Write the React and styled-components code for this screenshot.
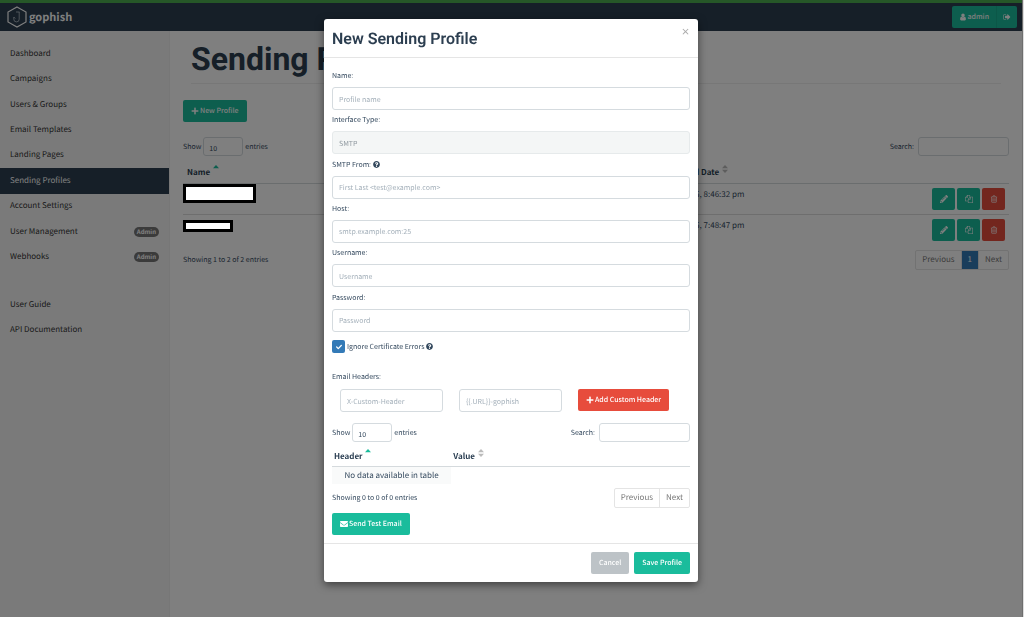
import React from "react";
import styled, { createGlobalStyle, css } from "styled-components";
import {
  FaCheck,
  FaEnvelope,
  FaPencilAlt,
  FaPlus,
  FaQuestionCircle,
} from "react-icons/fa";

const sans = `"Noto Sans CJK SC", "Noto Sans", sans-serif`;
const heading = `Roboto, "Liberation Sans", sans-serif`;

const ICONS = {
  user: "M1536 1399q0 109-62.5 187t-150.5 78h-854q-88 0-150.5-78t-62.5-187q0-85 8.5-160.5t31.5-152 58.5-131 94-89 134.5-34.5q131 128 313 128t313-128q76 0 134.5 34.5t94 89 58.5 131 31.5 152 8.5 160.5zm-256-887q0 159-112.5 271.5t-271.5 112.5-271.5-112.5-112.5-271.5 112.5-271.5 271.5-112.5 271.5 112.5 112.5 271.5z",
  signOut:
    "M704 1440q0 4 1 20t.5 26.5-3 23.5-10 19.5-20.5 6.5h-320q-119 0-203.5-84.5t-84.5-203.5v-704q0-119 84.5-203.5t203.5-84.5h320q13 0 22.5 9.5t9.5 22.5q0 4 1 20t.5 26.5-3 23.5-10 19.5-20.5 6.5h-320q-66 0-113 47t-47 113v704q0 66 47 113t113 47h312l11.5 1 11.5 3 8 5.5 7 9 2 13.5zm928-544q0 26-19 45l-544 544q-19 19-45 19t-45-19-19-45v-288h-448q-26 0-45-19t-19-45v-384q0-26 19-45t45-19h448v-288q0-26 19-45t45-19 45 19l544 544q19 19 19 45z",
  copy: "M1696 384q40 0 68 28t28 68v1216q0 40-28 68t-68 28h-960q-40 0-68-28t-28-68v-288h-544q-40 0-68-28t-28-68v-672q0-40 20-88t48-76l408-408q28-28 76-48t88-20h416q40 0 68 28t28 68v328q68-40 128-40h416zm-544 213l-299 299h299v-299zm-640-384l-299 299h299v-299zm196 647l316-316v-416h-384v416q0 40-28 68t-68 28h-416v640h512v-256q0-40 20-88t48-76zm956 804v-1152h-384v416q0 40-28 68t-68 28h-416v640h896z",
  trash:
    "M704 736v576q0 14-9 23t-23 9h-64q-14 0-23-9t-9-23v-576q0-14 9-23t23-9h64q14 0 23 9t9 23zm256 0v576q0 14-9 23t-23 9h-64q-14 0-23-9t-9-23v-576q0-14 9-23t23-9h64q14 0 23 9t9 23zm256 0v576q0 14-9 23t-23 9h-64q-14 0-23-9t-9-23v-576q0-14 9-23t23-9h64q14 0 23 9t9 23zm128 724v-948h-896v948q0 22 7 40.5t14.5 27 10.5 8.5h832q3 0 10.5-8.5t14.5-27 7-40.5zm-672-1076h448l-48-117q-7-9-17-11h-317q-10 2-17 11zm928 32v64q0 14-9 23t-23 9h-96v948q0 83-47 143.5t-113 60.5h-832q-66 0-113-58.5t-47-141.5v-952h-96q-14 0-23-9t-9-23v-64q0-14 9-23t23-9h309l70-167q15-37 54-63t79-26h320q40 0 79 26t54 63l70 167h309q14 0 23 9t9 23z",
};

const NAV = [
  { label: "Dashboard" },
  { label: "Campaigns" },
  { label: "Users & Groups" },
  { label: "Email Templates" },
  { label: "Landing Pages" },
  { label: "Sending Profiles", active: true },
  { label: "Account Settings" },
  { label: "User Management", admin: true },
  { label: "Webhooks", admin: true },
];

const HELP_NAV = [{ label: "User Guide" }, { label: "API Documentation" }];

const PROFILES = [
  { id: 1, date: "May 15th 2025, 8:46:32 pm", width: 73, height: 19 },
  { id: 2, date: "May 15th 2025, 7:48:47 pm", width: 50, height: 12 },
];

const FIELDS = [
  { id: "name", label: "Name:", placeholder: "Profile name" },
  { id: "type", label: "Interface Type:", value: "SMTP", disabled: true },
  {
    id: "from",
    label: "SMTP From:",
    placeholder: "First Last <test@example.com>",
    help: true,
  },
  { id: "host", label: "Host:", placeholder: "smtp.example.com:25" },
  { id: "username", label: "Username:", placeholder: "Username" },
  {
    id: "password",
    label: "Password:",
    placeholder: "Password",
    type: "password",
  },
];

function Icon({ name }) {
  return (
    <svg viewBox="0 0 1792 1792" fill="currentColor">
      <path d={ICONS[name]} />
    </svg>
  );
}

function SortMark({ sorted }) {
  return (
    <S.SortMark viewBox="0 0 6 8" $sorted={sorted}>
      <path d="M0 3.2 3 0l3 3.2z" />
      {!sorted && <path d="M0 4.8h6L3 8z" />}
    </S.SortMark>
  );
}

function NavList({ items, height }) {
  return (
    <S.NavList $height={height}>
      {items.map(({ label, active, admin }) => (
        <li key={label}>
          <S.NavLink href="#" $active={active}>
            {label}
            {admin && <S.Badge>Admin</S.Badge>}
          </S.NavLink>
        </li>
      ))}
    </S.NavList>
  );
}

function TableTools({ id }) {
  return (
    <S.TableTools>
      <S.InlineLabel htmlFor={`${id}-length`}>
        Show
        <S.Length id={`${id}-length`} defaultValue="10">
          <option>10</option>
          <option>25</option>
        </S.Length>
        entries
      </S.InlineLabel>
      <S.InlineLabel htmlFor={`${id}-search`} $wide>
        Search:
        <S.Search id={`${id}-search`} type="search" />
      </S.InlineLabel>
    </S.TableTools>
  );
}

function Pager({ pages = [] }) {
  return (
    <S.Pager>
      <button type="button">Previous</button>
      {pages.map((page) => (
        <button key={page} type="button" className="current">
          {page}
        </button>
      ))}
      <button type="button">Next</button>
    </S.Pager>
  );
}

function Header() {
  return (
    <S.Header>
      <S.Brand href="#">
        <svg viewBox="0 0 20 22" width="20" height="22" fill="none">
          <path d="M10 1l9 5v10l-9 5-9-5V6z" stroke="#fff" strokeWidth="1.2" />
          <path
            d="M9 6h3.500M12.200 6v7.200a2.700 2.700 0 0 1-5.400 0V11l1.500 1.500"
            stroke="#bdc6ce"
            strokeWidth="0.8"
          />
        </svg>
        gophish
      </S.Brand>
      <S.ButtonGroup>
        <S.Button type="button">
          <Icon name="user" />
          admin
        </S.Button>
        <S.Button type="button" aria-label="Log out">
          <Icon name="signOut" />
        </S.Button>
      </S.ButtonGroup>
    </S.Header>
  );
}

function ProfilesPage() {
  return (
    <S.Content>
      <S.Title>Sending Profiles</S.Title>
      <S.Button type="button">
        <FaPlus />
        New Profile
      </S.Button>
      <S.TableBlock>
        <TableTools id="profiles" />
        <S.ProfileTable>
          <thead>
            <tr>
              <th className="name">
                Name <SortMark sorted />
              </th>
              <th className="type">Interface Type</th>
              <th>
                Last Modified Date <SortMark />
              </th>
              <th aria-label="Actions" />
            </tr>
          </thead>
          <tbody>
            {PROFILES.map(({ id, date, width, height }) => (
              <tr key={id}>
                <td className="name">
                  <S.Redacted style={{ width, height }} />
                </td>
                <td>SMTP</td>
                <td>{date}</td>
                <td className="actions">
                  <S.Actions>
                    <S.Button type="button" aria-label="Edit">
                      <FaPencilAlt />
                    </S.Button>
                    <S.Button type="button" aria-label="Copy">
                      <Icon name="copy" />
                    </S.Button>
                    <S.Button type="button" aria-label="Delete" $kind="danger">
                      <Icon name="trash" />
                    </S.Button>
                  </S.Actions>
                </td>
              </tr>
            ))}
          </tbody>
        </S.ProfileTable>
        <S.TableFoot>
          <span>Showing 1 to 2 of 2 entries</span>
          <Pager pages={[1]} />
        </S.TableFoot>
      </S.TableBlock>
    </S.Content>
  );
}

function ProfileModal() {
  return (
    <S.Modal role="dialog" aria-labelledby="modal-title">
      <S.ModalHead>
        <h4 id="modal-title">New Sending Profile</h4>
        <S.Close type="button" aria-label="Close">
          ×
        </S.Close>
      </S.ModalHead>
      <S.ModalBody>
        <S.Fields>
          {FIELDS.map(({ id, label, help, value, ...rest }) => (
            <div key={id}>
              <S.Label htmlFor={id}>
                {label}
                {help && <FaQuestionCircle />}
              </S.Label>
              <S.Input id={id} type="text" defaultValue={value} {...rest} />
            </div>
          ))}
        </S.Fields>
        <S.Check htmlFor="ignore">
          <S.CheckBox>
            <input id="ignore" type="checkbox" defaultChecked />
            <FaCheck />
          </S.CheckBox>
          Ignore Certificate Errors
          <FaQuestionCircle />
        </S.Check>
        <S.Label htmlFor="header-key">Email Headers:</S.Label>
        <S.HeaderRow>
          <S.Input id="header-key" placeholder="X-Custom-Header" />
          <S.Input aria-label="Header value" placeholder="{{.URL}}-gophish" />
          <S.Button type="button" $kind="danger">
            <FaPlus />
            Add Custom Header
          </S.Button>
        </S.HeaderRow>
        <TableTools id="headers" />
        <S.HeaderTable>
          <thead>
            <tr>
              <th>
                Header <SortMark sorted />
              </th>
              <th>
                Value <SortMark />
              </th>
              <th aria-label="Remove" />
            </tr>
          </thead>
          <tbody>
            <tr>
              <td>No data available in table</td>
            </tr>
          </tbody>
        </S.HeaderTable>
        <S.TableFoot $modal>
          <span>Showing 0 to 0 of 0 entries</span>
          <Pager />
        </S.TableFoot>
        <S.Button type="button">
          <FaEnvelope />
          Send Test Email
        </S.Button>
      </S.ModalBody>
      <S.ModalFoot>
        <S.Button type="button" $kind="muted">
          Cancel
        </S.Button>
        <S.Button type="button">Save Profile</S.Button>
      </S.ModalFoot>
    </S.Modal>
  );
}

function App() {
  return (
    <>
      <GlobalStyle />
      <S.Page>
        <S.Progress />
        <Header />
        <S.Columns>
          <S.Sidebar>
            <NavList items={NAV} height={229} />
            <NavList items={HELP_NAV} height={51} />
          </S.Sidebar>
          <ProfilesPage />
        </S.Columns>
      </S.Page>
      <S.Backdrop />
      <S.ModalWrap>
        <ProfileModal />
      </S.ModalWrap>
    </>
  );
}

export default App;

const GlobalStyle = createGlobalStyle`
  *, *::before, *::after {
    box-sizing: border-box;
  }

  body {
    margin: 0;
    overflow: hidden;
    background: #fff;
    color: #34495e;
    font-family: ${sans};
    font-size: 7px;
    line-height: 12px;
    text-rendering: geometricPrecision;
  }

  button, input, select {
    font: inherit;
    text-rendering: inherit;
  }

  a {
    color: inherit;
    text-decoration: none;
  }
`;

const kinds = {
  primary: "#1abc9c",
  danger: "#e74c3c",
  muted: "#bdc3c7",
};

const fieldBox = css`
  border: 1px solid #d5dbdf;
  border-radius: 3px;
  background: #fff;
  color: #34495e;
  outline: none;
`;

const tableBase = css`
  width: 100%;
  border-collapse: collapse;
  table-layout: fixed;
  font-size: 8px;

  th {
    padding: 0 4px;
    border-bottom: 1px solid #d5dadd;
    color: #283c50;
    font-weight: 700;
    text-align: left;
    white-space: nowrap;
  }
`;

const S = {
  Page: styled.div`
    display: flex;
    flex-direction: column;
    min-height: 100vh;
    border-right: 2px solid #ddd;
  `,

  Progress: styled.div`
    height: 3px;
    background: #4caf50;
  `,

  Header: styled.header`
    display: flex;
    align-items: center;
    justify-content: space-between;
    height: 28px;
    padding: 0 5px 0 7px;
    background: #2c3e50;
  `,

  Brand: styled.a`
    display: flex;
    align-items: center;
    gap: 2px;
    color: #fff;
    font-size: 11px;
    font-weight: 700;
  `,

  ButtonGroup: styled.div`
    display: flex;

    button:first-child {
      padding: 0 7px;
      border-right: 1px solid #18ae91;
      border-radius: 2px 0 0 2px;
    }

    button:last-child {
      padding: 0 6px;
      border-radius: 0 2px 2px 0;
    }
  `,

  Button: styled.button`
    display: inline-flex;
    align-items: center;
    justify-content: center;
    gap: 1px;
    height: 22px;
    padding: 0 8px;
    border: 0;
    border-radius: 2px;
    background: ${({ $kind = "primary" }) => kinds[$kind]};
    color: #fff;
    font-weight: 500;
    white-space: nowrap;

    svg {
      width: 8px;
      height: 8px;
    }
  `,

  Columns: styled.div`
    display: flex;
    flex: 1;
  `,

  Sidebar: styled.nav`
    display: flex;
    flex-direction: column;
    gap: 22px;
    width: 170px;
    padding-top: 10px;
    border-right: 1px solid #eee;
    background: #f5f5f5;
    font-size: 8px;
  `,

  NavList: styled.ul`
    display: grid;
    grid-auto-rows: 1fr;
    min-height: ${({ $height }) => $height}px;
    margin: 0;
    padding: 0;
    list-style: none;
  `,

  NavLink: styled.a`
    display: flex;
    align-items: center;
    justify-content: space-between;
    height: 100%;
    padding: 0 10px;
    background: ${({ $active }) => ($active ? "#2c3e50" : "transparent")};
    color: ${({ $active }) => ($active ? "#fff" : "#333")};
  `,

  Badge: styled.span`
    padding: 0 3px;
    border-radius: 5px;
    background: #777;
    color: #fff;
    font-size: 6px;
    font-weight: 700;
    line-height: 10px;
  `,

  Content: styled.main`
    flex: 1;
    padding: 0 13px;
  `,

  Title: styled.h1`
    margin: 0 8px 16px;
    padding: 4px 0 0;
    border-bottom: 1px solid #eee;
    color: #2c3e50;
    font-family: ${heading};
    font-size: 32px;
    line-height: 48px;
  `,

  TableBlock: styled.section`
    padding-top: 15px;
  `,

  TableTools: styled.div`
    display: flex;
    align-items: flex-start;
    justify-content: space-between;
  `,

  InlineLabel: styled.label`
    display: flex;
    align-items: center;
    gap: ${({ $wide }) => ($wide ? 4 : 2)}px;
  `,

  Length: styled.select`
    ${fieldBox}
    appearance: none;
    width: 40px;
    height: 19px;
    padding: 5px 5px 0;
  `,

  Search: styled.input`
    ${fieldBox}
    appearance: none;
    width: 91px;
    height: 19px;
  `,

  SortMark: styled.svg`
    width: 6px;
    height: 8px;
    margin-left: 1px;
    vertical-align: 2px;
    fill: ${({ $sorted }) => ($sorted ? "#1abc9c" : "#bbb")};
  `,

  ProfileTable: styled.table`
    ${tableBase}

    th {
      height: 27px;
      padding-top: 5px;
    }

    th.name {
      width: 28%;
    }

    th.type {
      width: 228px;
    }

    td {
      height: 31px;
      padding: 5px 4px 4px;
      border-bottom: 1px solid #ddd;
      vertical-align: top;
    }

    td.name {
      padding: 0;
    }

    td.actions {
      padding: 4px;
    }

    tr:last-child td {
      border-bottom: 0;
    }

    tr:last-child td.name {
      padding-top: 5px;
    }
  `,

  Redacted: styled.div`
    position: relative;
    z-index: 2;
    border: 3px solid #000;
    background: #fff;
  `,

  Actions: styled.div`
    display: flex;
    justify-content: flex-end;
    gap: 2px;

    button {
      width: 23px;
      padding: 0;
    }
  `,

  TableFoot: styled.div`
    display: flex;
    align-items: center;
    justify-content: space-between;
    margin: ${({ $modal }) => ($modal ? "4px 0 5px" : "5px 0 0")};
  `,

  Pager: styled.div`
    display: flex;
    border: 1px solid #e4e4e4;
    border-radius: 2px;

    button {
      height: 18px;
      padding: 0 6px;
      border: 0;
      background: transparent;
      color: #777;
      font-size: 8px;
    }

    button + button {
      border-left: 1px solid #e4e4e4;
    }

    .current {
      background: #337ab7;
      color: #fff;
    }
  `,

  Backdrop: styled.div`
    position: fixed;
    inset: 0 1px 0 0;
    z-index: 1;
    background: rgba(0, 0, 0, 0.5);
  `,

  ModalWrap: styled.div`
    position: fixed;
    inset: 0;
    z-index: 3;
    padding: 19px 2px 0 0;
    pointer-events: none;
  `,

  Modal: styled.section`
    width: 374px;
    margin: 0 auto;
    border-radius: 3px;
    background: #fff;
    box-shadow: 0 3px 9px rgba(0, 0, 0, 0.5);
    pointer-events: auto;
  `,

  ModalHead: styled.div`
    display: flex;
    align-items: flex-start;
    justify-content: space-between;
    padding: 8px 8px 7px;
    border-bottom: 1px solid #e5e5e5;

    h4 {
      margin: 0;
      color: #2c3e50;
      font-family: ${heading};
      font-size: 16px;
      font-weight: 600;
      line-height: 23px;
    }
  `,

  Close: styled.button`
    padding: 0;
    border: 0;
    background: none;
    color: #aaa;
    font-size: 9px;
    font-weight: 700;
    line-height: 10px;
  `,

  ModalBody: styled.div`
    padding: 8px;
  `,

  Fields: styled.div`
    display: grid;
    grid-auto-rows: 1fr;
    min-height: 266px;
  `,

  Label: styled.label`
    display: flex;
    align-items: center;
    gap: 2px;
    height: 21px;
    padding-bottom: 1px;
  `,

  Input: styled.input`
    ${fieldBox}
    display: block;
    width: 100%;
    height: 23px;
    padding: 2px 6px 0;

    &::placeholder {
      color: #a4b0ba;
      opacity: 1;
    }

    &:disabled {
      border-color: #e6eaeb;
      background: #f4f6f6;
      color: #8f989f;
    }
  `,

  Check: styled.label`
    display: flex;
    align-items: center;
    gap: 2px;
    margin: 8px 0 14px;
  `,

  CheckBox: styled.span`
    display: grid;
    width: 13px;
    height: 13px;

    input,
    svg {
      grid-area: 1 / 1;
      place-self: center;
    }

    input {
      appearance: none;
      width: 13px;
      height: 13px;
      margin: 0;
      border-radius: 2px;
      background: #337ab7;
    }

    svg {
      width: 6px;
      height: 6px;
      color: #fff;
    }
  `,

  HeaderRow: styled.div`
    display: grid;
    grid-template-columns: 103px 103px auto;
    justify-content: start;
    gap: 16px;
    padding: 1px 8px 11px;
  `,

  HeaderTable: styled.table`
    ${tableBase}

    th {
      height: 24px;
      padding: 5px 2px 0;
    }

    td {
      height: 18px;
      padding: 1px 0 0;
      background: #f9fafa;
      text-align: center;
    }
  `,

  ModalFoot: styled.div`
    display: flex;
    justify-content: flex-end;
    gap: 5px;
    padding: 8px;
    border-top: 1px solid #e5e5e5;
  `,
};
